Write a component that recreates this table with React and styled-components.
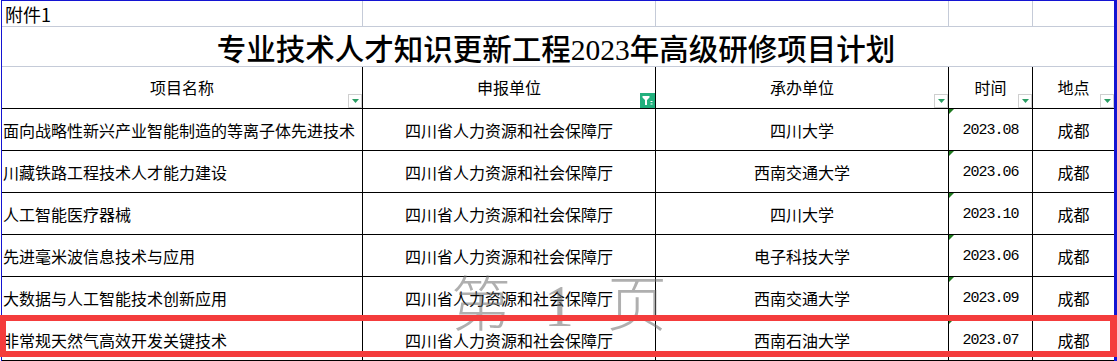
import React from "react";
import styled, { createGlobalStyle } from "styled-components";

const GlobalStyle = createGlobalStyle`
  html, body {
    margin: 0;
    padding: 0;
    background: #ffffff;
  }
  * {
    box-sizing: border-box;
  }
`;

const rows = [
  ["面向战略性新兴产业智能制造的等离子体先进技术", "四川省人力资源和社会保障厅", "四川大学", "2023.08", "成都"],
  ["川藏铁路工程技术人才能力建设", "四川省人力资源和社会保障厅", "西南交通大学", "2023.06", "成都"],
  ["人工智能医疗器械", "四川省人力资源和社会保障厅", "四川大学", "2023.10", "成都"],
  ["先进毫米波信息技术与应用", "四川省人力资源和社会保障厅", "电子科技大学", "2023.06", "成都"],
  ["大数据与人工智能技术创新应用", "四川省人力资源和社会保障厅", "西南交通大学", "2023.09", "成都"],
  ["非常规天然气高效开发关键技术", "四川省人力资源和社会保障厅", "西南石油大学", "2023.07", "成都"],
];

const headers = [
  { label: "项目名称", filter: "drop" },
  { label: "申报单位", filter: "active" },
  { label: "承办单位", filter: "drop" },
  { label: "时间", filter: "drop" },
  { label: "地点", filter: "drop" },
];

function DropButton() {
  return (
    <Drop>
      <svg width="7" height="4" viewBox="0 0 7 4">
        <polygon points="0,0 7,0 3.5,4" fill="#2a9d63" />
      </svg>
    </Drop>
  );
}

function ActiveFilter() {
  return (
    <Active>
      <svg width="15" height="15" viewBox="0 0 15 15">
        <rect width="15" height="15" fill="#22b07d" />
        <polygon points="2.5,3 9.5,3 9.5,4.5 7,7 7,12 5,12 5,7 2.5,4.5" fill="#ffffff" />
        <rect x="10.5" y="8" width="2" height="1" fill="#ffffff" />
        <rect x="10.5" y="10.5" width="2" height="1" fill="#ffffff" />
      </svg>
    </Active>
  );
}

function App() {
  return (
    <Page>
      <GlobalStyle />
      <Frame>
        <Sheet>
          <TopCell $first>附件1</TopCell>
          <TopCell />
          <TopCell />
          <TopCell />
          <TopCell $last />

          <TitleCell>专业技术人才知识更新工程2023年高级研修项目计划</TitleCell>

          {headers.map((h, i) => (
            <HeadCell key={h.label} $last={i === headers.length - 1}>
              {h.label}
              {h.filter === "active" ? <ActiveFilter /> : <DropButton />}
            </HeadCell>
          ))}

          {rows.map((row, r) =>
            row.map((text, c) => (
              <BodyCell
                key={r + "-" + c}
                $left={c === 0}
                $mono={c === 3}
                $last={c === 4}
              >
                {text}
              </BodyCell>
            ))
          )}
        </Sheet>
      </Frame>

      <Watermark>第 1 页</Watermark>
      <Highlight />
    </Page>
  );
}

const Page = styled.div`
  position: relative;
  width: 1117px;
  height: 361px;
  overflow: hidden;
  background: #ffffff;
  font-family: "Noto Sans CJK SC", "Liberation Sans", sans-serif;
  color: #000000;
`;

const Frame = styled.div`
  margin-left: 1px;
  width: 1116px;
  border-top: 1px solid #1414d2;
  border-left: 1px solid #1414d2;
  border-right: 3px solid #1414d2;
`;

const Sheet = styled.div`
  display: grid;
  grid-template-columns: 361px 293px 293px 84px 81px;
`;

const TopCell = styled.div`
  height: 26px;
  display: flex;
  align-items: center;
  padding-left: 3px;
  font-size: 18px;
  border-bottom: 1px solid #c5cbd8;
  border-right: ${(p) => (p.$last ? "none" : "1px solid #c5cbd8")};
`;

const TitleCell = styled.div`
  grid-column: 1 / -1;
  height: 40px;
  display: flex;
  align-items: center;
  justify-content: center;
  padding-right: 4px;
  font-family: "Liberation Serif", "Noto Sans CJK SC", serif;
  font-size: 29.5px;
  font-weight: 500;
  border-bottom: 1px solid #c5cbd8;
`;

const HeadCell = styled.div`
  position: relative;
  height: 42px;
  display: flex;
  align-items: center;
  justify-content: center;
  padding-bottom: 2px;
  font-size: 16px;
  border-bottom: 1px solid #000000;
  border-right: ${(p) => (p.$last ? "none" : "1px solid #000000")};
`;

const Drop = styled.span`
  position: absolute;
  right: 0;
  bottom: 0;
  width: 14px;
  height: 14px;
  display: flex;
  align-items: center;
  justify-content: center;
  background: #ffffff;
  border: 1px solid #cfcfcf;
`;

const Active = styled.span`
  position: absolute;
  right: 0;
  bottom: 0;
  width: 15px;
  height: 15px;
  display: flex;
`;

const BodyCell = styled.div`
  position: relative;
  height: 42px;
  display: flex;
  align-items: center;
  justify-content: ${(p) => (p.$left ? "flex-start" : "center")};
  padding-left: ${(p) => (p.$left ? "1px" : "0")};
  padding-top: 1px;
  font-family: ${(p) =>
    p.$mono
      ? '"Liberation Mono", "Noto Sans CJK SC", monospace'
      : '"Noto Sans CJK SC", "Liberation Sans", sans-serif'};
  font-size: ${(p) => (p.$mono ? "15px" : "16px")};
  letter-spacing: ${(p) => (p.$mono ? "-1px" : "0")};
  border-bottom: 1px solid #000000;
  border-right: ${(p) => (p.$last ? "none" : "1px solid #000000")};

  &::before {
    content: "";
    display: ${(p) => (p.$mono ? "block" : "none")};
    position: absolute;
    left: 0;
    top: 0;
    border-top: 5px solid #1f7a1f;
    border-right: 5px solid transparent;
  }
`;

const Watermark = styled.div`
  position: absolute;
  left: 451px;
  top: 276px;
  font-family: "Liberation Serif", "Noto Sans CJK SC", serif;
  font-size: 60px;
  font-weight: 300;
  letter-spacing: 9px;
  line-height: 1;
  color: rgba(110, 110, 110, 0.55);
  white-space: pre;
  pointer-events: none;
`;

const Highlight = styled.div`
  position: absolute;
  left: 0;
  top: 315px;
  width: 1117px;
  height: 42px;
  border: 6px solid #f43c3c;
  border-right-width: 7px;
  pointer-events: none;
`;

export default App;
